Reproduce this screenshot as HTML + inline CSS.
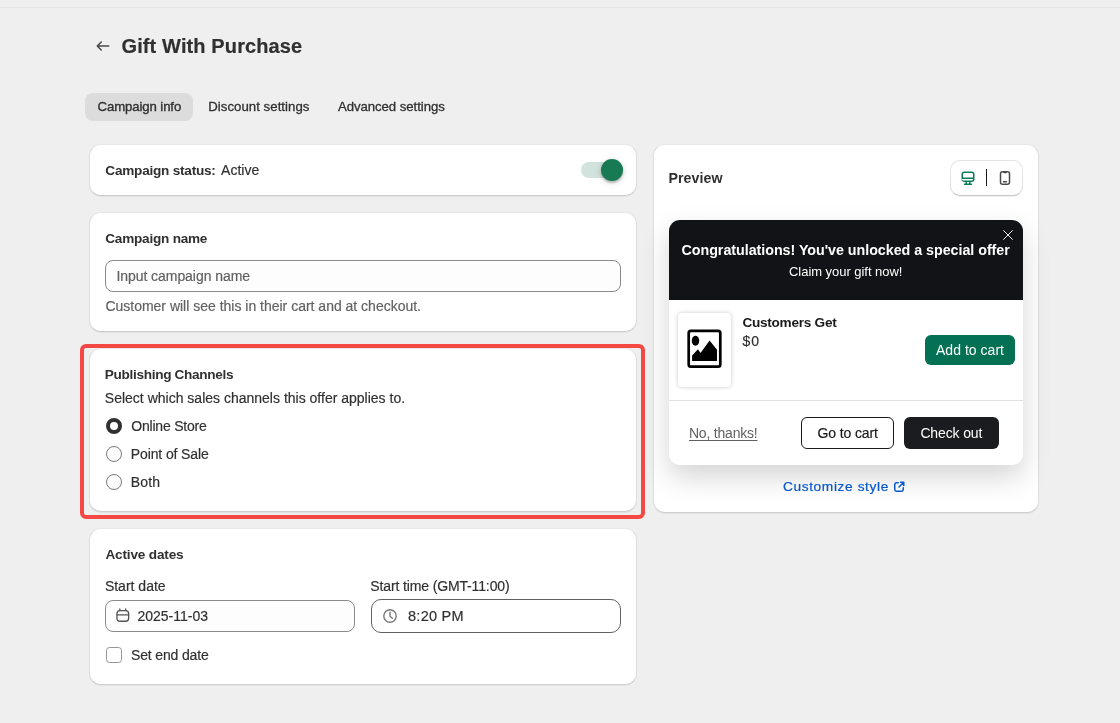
<!DOCTYPE html>
<html lang="en">
<head>
<meta charset="utf-8">
<title>Gift With Purchase</title>
<style>
html,body{margin:0;padding:0;}
body{width:1120px;height:723px;overflow:hidden;position:relative;background:#efefef;color:#303030;
  font-family:"Liberation Sans",Arial,sans-serif;font-size:13.5px;-webkit-font-smoothing:antialiased;}
#root{position:absolute;left:0;top:0;width:1120px;height:723px;overflow:hidden;will-change:transform;transform:translateZ(0);background:#efefef;}
.abs{position:absolute;}
.t{position:absolute;white-space:nowrap;line-height:20px;font-size:14px;color:#303030;letter-spacing:0px;-webkit-text-stroke:0.18px currentColor;}
.b{font-weight:700;font-size:13.6px;letter-spacing:-0.28px;-webkit-text-stroke:0;}
.sub{color:#616161;}
.topline{position:absolute;left:0;top:7px;width:1120px;height:1px;background:#e6e6e6;}
.card{position:absolute;left:89px;width:548px;background:#fff;border-radius:12px;box-sizing:border-box;
  border:1px solid #dedede;border-top-color:#e6e6e6;border-bottom-color:#cfcfcf;box-shadow:0 1px 0 rgba(26,26,26,.05);}
.pill{position:absolute;left:85px;top:93px;width:108px;height:28px;border-radius:8px;background:#dcdcdc;}
.input{position:absolute;box-sizing:border-box;border:1px solid #8a8a8a;border-radius:8px;background:#fdfdfd;}
.redbox{position:absolute;left:80px;top:344px;width:565px;height:175px;box-sizing:border-box;border:4px solid #f44844;border-radius:6px;}
.radio{position:absolute;left:106px;width:16px;height:16px;box-sizing:border-box;border-radius:50%;border:1px solid #7a7a7a;background:#fdfdfd;}
.radio.on{border:4.6px solid #303030;background:#fff;}
.check{position:absolute;left:106px;top:647px;width:16px;height:16px;box-sizing:border-box;border-radius:3.5px;border:1px solid #959595;background:#fff;}

.pcard{position:absolute;left:653px;top:144px;width:386px;height:369px;background:#fff;border-radius:12px;box-sizing:border-box;
  border:1px solid #dedede;border-top-color:#e6e6e6;border-bottom-color:#cfcfcf;box-shadow:0 1px 0 rgba(26,26,26,.05);}
.seg{position:absolute;left:950px;top:160px;width:73px;height:36px;box-sizing:border-box;border:1px solid #e3e3e3;border-bottom-color:#c9c9c9;border-radius:10px;background:#fff;box-shadow:0 1px 0 rgba(0,0,0,.06);}
.popup{position:absolute;left:669px;top:220px;width:354px;height:245px;border-radius:11px;background:#fff;overflow:visible;
  box-shadow:0 12px 28px rgba(0,0,0,.17);}
.phead{position:absolute;left:0;top:0;width:354px;height:80px;background:#121316;border-radius:11px 11px 0 0;}
.pdiv{position:absolute;left:669px;top:400px;width:354px;height:1px;background:#e0e0e0;}
.imgbox{position:absolute;left:678px;top:313px;width:53px;height:74px;background:#fff;border-radius:4px;box-shadow:0 0 4px rgba(20,20,60,.22);}
.btn{position:absolute;box-sizing:border-box;border-radius:6px;}
.w{color:#fff;-webkit-text-stroke:0;}
</style>
</head>
<body>
<div id="root">
<div class="topline"></div>

<!-- header -->
<svg class="abs" style="left:93.2px;top:36px" width="20" height="20" viewBox="0 0 20 20"><path fill="#4a4a4a" d="M16.5 10a.75.75 0 0 1-.75.75h-9.69l2.72 2.72a.75.75 0 0 1-1.06 1.06l-4-4a.75.75 0 0 1 0-1.06l4-4a.75.75 0 1 1 1.06 1.06l-2.72 2.72h9.69a.75.75 0 0 1 .75.75Z"/></svg>
<div class="t" id="title" style="left:121.50px;top:34px;font-size:20px;line-height:24px;font-weight:700;letter-spacing:0.117px">Gift With Purchase</div>

<!-- tabs -->
<div class="pill"></div>
<div class="t" id="tab1" style="left:97.50px;top:97px;font-size:13.2px;letter-spacing:-0.106px;-webkit-text-stroke:0.35px #303030">Campaign info</div>
<div class="t" id="tab2" style="left:208.20px;top:97px;font-size:13.2px;letter-spacing:0.050px;-webkit-text-stroke:0.3px #303030">Discount settings</div>
<div class="t" id="tab3" style="left:337.90px;top:97px;font-size:13.2px;letter-spacing:-0.050px;-webkit-text-stroke:0.3px #303030">Advanced settings</div>

<!-- card 1 -->
<div class="card" style="top:144px;height:52px"></div>
<div class="t b" id="status_l" style="left:105.30px;top:161px;letter-spacing:-0.232px">Campaign status:</div>
<div class="t" id="status_v" style="left:221.06px;top:160px;letter-spacing:0.000px">Active</div>

<!-- card 2 -->
<div class="card" style="top:212px;height:120px"></div>
<div class="t b" id="cname" style="left:105.30px;top:229px;letter-spacing:-0.240px">Campaign name</div>
<div class="input" style="left:105px;top:260px;width:516px;height:32px"></div>
<div class="t sub" id="ph" style="left:116.44px;top:266px;letter-spacing:-0.058px">Input campaign name</div>
<div class="t sub" id="help" style="left:105.40px;top:296px;letter-spacing:-0.006px">Customer will see this in their cart and at checkout.</div>

<!-- card 3 -->
<div class="redbox"></div>
<div class="card" style="top:348px;height:164px"></div>
<div class="t b" id="pub" style="left:104.82px;top:365px;letter-spacing:-0.316px">Publishing Channels</div>
<div class="t" id="sel" style="left:104.82px;top:388px;letter-spacing:0.003px">Select which sales channels this offer applies to.</div>
<div class="radio on" style="top:418px"></div>
<div class="t" id="r1" style="left:131.30px;top:416px;letter-spacing:-0.218px">Online Store</div>
<div class="radio" style="top:446px"></div>
<div class="t" id="r2" style="left:130.82px;top:444px;letter-spacing:-0.120px">Point of Sale</div>
<div class="radio" style="top:474px"></div>
<div class="t" id="r3" style="left:130.82px;top:472px;letter-spacing:0.160px">Both</div>

<!-- card 4 -->
<div class="card" style="top:528px;height:157px"></div>
<div class="t b" id="adates" style="left:105.40px;top:545px;letter-spacing:-0.164px">Active dates</div>
<div class="t" id="sdate" style="left:104.90px;top:576px;letter-spacing:-0.000px">Start date</div>
<div class="t" id="stime" style="left:370.36px;top:576px;letter-spacing:-0.137px">Start time (GMT-11:00)</div>
<div class="input" style="left:105px;top:600px;width:250px;height:32px"></div>
<div class="t" id="dval" style="left:137.40px;top:606px;letter-spacing:0.000px">2025-11-03</div>
<div class="input" style="left:371px;top:599px;width:250px;height:34px;border-color:#616161;background:#fff;border-radius:10px"></div>
<div class="t" id="tval" style="left:408.00px;top:606px;font-size:14.5px;letter-spacing:0.267px">8:20 PM</div>
<div class="check"></div>
<div class="t" id="endd" style="left:130.96px;top:645px;letter-spacing:-0.146px">Set end date</div>

<!-- toggle -->
<div class="abs" style="left:581px;top:162px;width:38px;height:16px;border-radius:8px;background:#d1e3dc"></div>
<div class="abs" style="left:601px;top:159px;width:22px;height:22px;border-radius:50%;background:#177a53;box-shadow:0 2px 2px rgba(0,0,0,.2),0 1px 5px rgba(0,0,0,.12),0 2px 12px rgba(0,0,0,.07)"></div>

<!-- preview card -->
<div class="pcard"></div>
<div class="t b" id="prev" style="left:668.50px;top:168px;font-size:14.2px;letter-spacing:0.050px">Preview</div>
<div class="seg"></div>
<svg class="abs" style="left:958px;top:167.6px" width="20" height="20" viewBox="0 0 20 20"><path fill="#0a7a5b" fill-rule="evenodd" d="M3.5 6.25a2.75 2.75 0 0 1 2.75-2.75h7.5a2.75 2.75 0 0 1 2.75 2.75v5a2.75 2.75 0 0 1-2.75 2.75h-1.25v1.5h1a.75.75 0 0 1 0 1.5h-7a.75.75 0 0 1 0-1.5h1v-1.5h-1.250a2.750 2.750 0 0 1-2.750-2.750v-5Zm5.500 7.750v1.500h2v-1.500h-2Zm-3.750-1.500h8.500c.690 0 1.250-.560 1.250-1.250v-.250h-11v.250c0 .690.560 1.250 1.250 1.250Zm9.750-3v-3.250c0-.690-.560-1.250-1.250-1.250h-7.500c-.690 0-1.250.560-1.250 1.250v3.250h11Z"/></svg>
<div class="abs" style="left:985.6px;top:169px;width:1.6px;height:17px;background:#1a1a1a"></div>
<svg class="abs" style="left:995.2px;top:168px" width="20" height="20" viewBox="0 0 20 20"><path fill="#4a4a4a" d="M7.75 13.75a.75.75 0 0 1 .75-.75h3a.75.75 0 0 1 0 1.500h-3a.75.75 0 0 1-.75-.75Z"/><path fill="#4a4a4a" fill-rule="evenodd" d="M4.750 5.750a2.750 2.750 0 0 1 2.750-2.750h5a2.750 2.750 0 0 1 2.750 2.750v8.500a2.750 2.750 0 0 1-2.750 2.750h-5a2.750 2.750 0 0 1-2.750-2.750v-8.500Zm2.750-1.250c-.690 0-1.250.560-1.250 1.250v8.500c0 .690.560 1.250 1.250 1.250h5c.690 0 1.250-.560 1.250-1.250v-8.500c0-.690-.560-1.250-1.250-1.250h-.531a1 1 0 0 1-.969.750h-2a1 1 0 0 1-.969-.750h-.531Z"/></svg>

<!-- popup -->
<div class="popup"><div class="phead"></div></div>
<svg class="abs" style="left:1003px;top:230px" width="10" height="10" viewBox="0 0 10 10"><path d="M0.3 0.3L9.7 9.7M9.7 0.3L0.3 9.7" stroke="#efefef" stroke-width="1" fill="none"/></svg>
<div class="t w" id="ptitle" style="left:681.50px;top:240px;font-size:14.3px;font-weight:700;letter-spacing:-0.040px">Congratulations! You've unlocked a special offer</div>
<div class="t w" id="claim" style="left:789.00px;top:262px;font-size:13px;letter-spacing:-0.040px">Claim your gift now!</div>
<div class="imgbox"></div>
<svg class="abs" style="left:687px;top:329px" width="35" height="40" viewBox="0 0 35 40"><rect x="1.700" y="1.900" width="31.600" height="35.700" rx="2.200" fill="#fff" stroke="#000" stroke-width="2.700"/><ellipse cx="8.500" cy="11.700" rx="3.700" ry="5" fill="#000"/><path d="M5.100 32V26.400L11 20.200L13.500 23.900L22.600 11.400L30 20.800V32Z" fill="#000"/></svg>
<div class="t b" id="cget" style="left:742.40px;top:313px;font-size:13.6px;letter-spacing:-0.260px;color:#1a1a1a">Customers Get</div>
<div class="t" id="price" style="left:742.40px;top:331px;font-size:14px;letter-spacing:0.960px;color:#303030">$0</div>
<div class="btn" style="left:925px;top:335px;width:90px;height:30px;background:#047054"></div>
<div class="t w" id="addc" style="left:936.00px;top:340px;font-size:14px;letter-spacing:0.030px">Add to cart</div>
<div class="pdiv"></div>
<div class="t" id="noth" style="left:688.98px;top:423px;font-size:14px;letter-spacing:-0.206px;color:#616161;text-decoration:underline;-webkit-text-stroke:0;text-underline-offset:2px">No, thanks!</div>
<div class="btn" style="left:801px;top:417px;width:93px;height:32px;background:#fff;border:1px solid #1a1a1a"></div>
<div class="t" id="gocart" style="left:817.40px;top:423px;font-size:14px;letter-spacing:-0.100px;color:#1a1a1a">Go to cart</div>
<div class="btn" style="left:904px;top:417px;width:95px;height:32px;background:#1b1c1f"></div>
<div class="t w" id="chk" style="left:920.40px;top:423px;font-size:14px;letter-spacing:-0.130px">Check out</div>
<div class="t" id="cust" style="left:783.00px;top:477px;font-size:13.7px;letter-spacing:0.620px;color:#0858cf;-webkit-text-stroke:0.22px #0858cf">Customize style</div>
<svg class="abs" style="left:893.4px;top:480.6px" width="12" height="12" viewBox="0 0 12 12"><path d="M5.2 1.75H3.4a1.65 1.65 0 0 0-1.65 1.65v5.2a1.650 1.650 0 0 0 1.650 1.650h5.200a1.650 1.650 0 0 0 1.650-1.650V6.800" fill="none" stroke="#0858cf" stroke-width="1.5" stroke-linecap="round"/><path d="M7.600 1.250h3.150v3.150M10.500 1.500L6 6" fill="none" stroke="#0858cf" stroke-width="1.500" stroke-linecap="round" stroke-linejoin="round"/></svg>

<!-- input icons -->
<svg class="abs" style="left:113px;top:606px" width="20" height="20" viewBox="0 0 20 20"><rect x="3.950" y="4.650" width="11.700" height="10.600" rx="3" fill="none" stroke="#555" stroke-width="1.300"/><path d="M4 8.800H15.600M6.800 3V4.600M12.700 3V4.600" stroke="#555" stroke-width="1.300" fill="none" stroke-linecap="round"/></svg>
<svg class="abs" style="left:380px;top:606px" width="20" height="20" viewBox="0 0 20 20"><circle cx="10" cy="10" r="6.2" fill="none" stroke="#7a7a7a" stroke-width="1.4"/><path d="M10 6.3V10.2L12.3 12.2" fill="none" stroke="#7a7a7a" stroke-width="1.4" stroke-linecap="round" stroke-linejoin="round"/></svg>

</div>
</body>
</html>
